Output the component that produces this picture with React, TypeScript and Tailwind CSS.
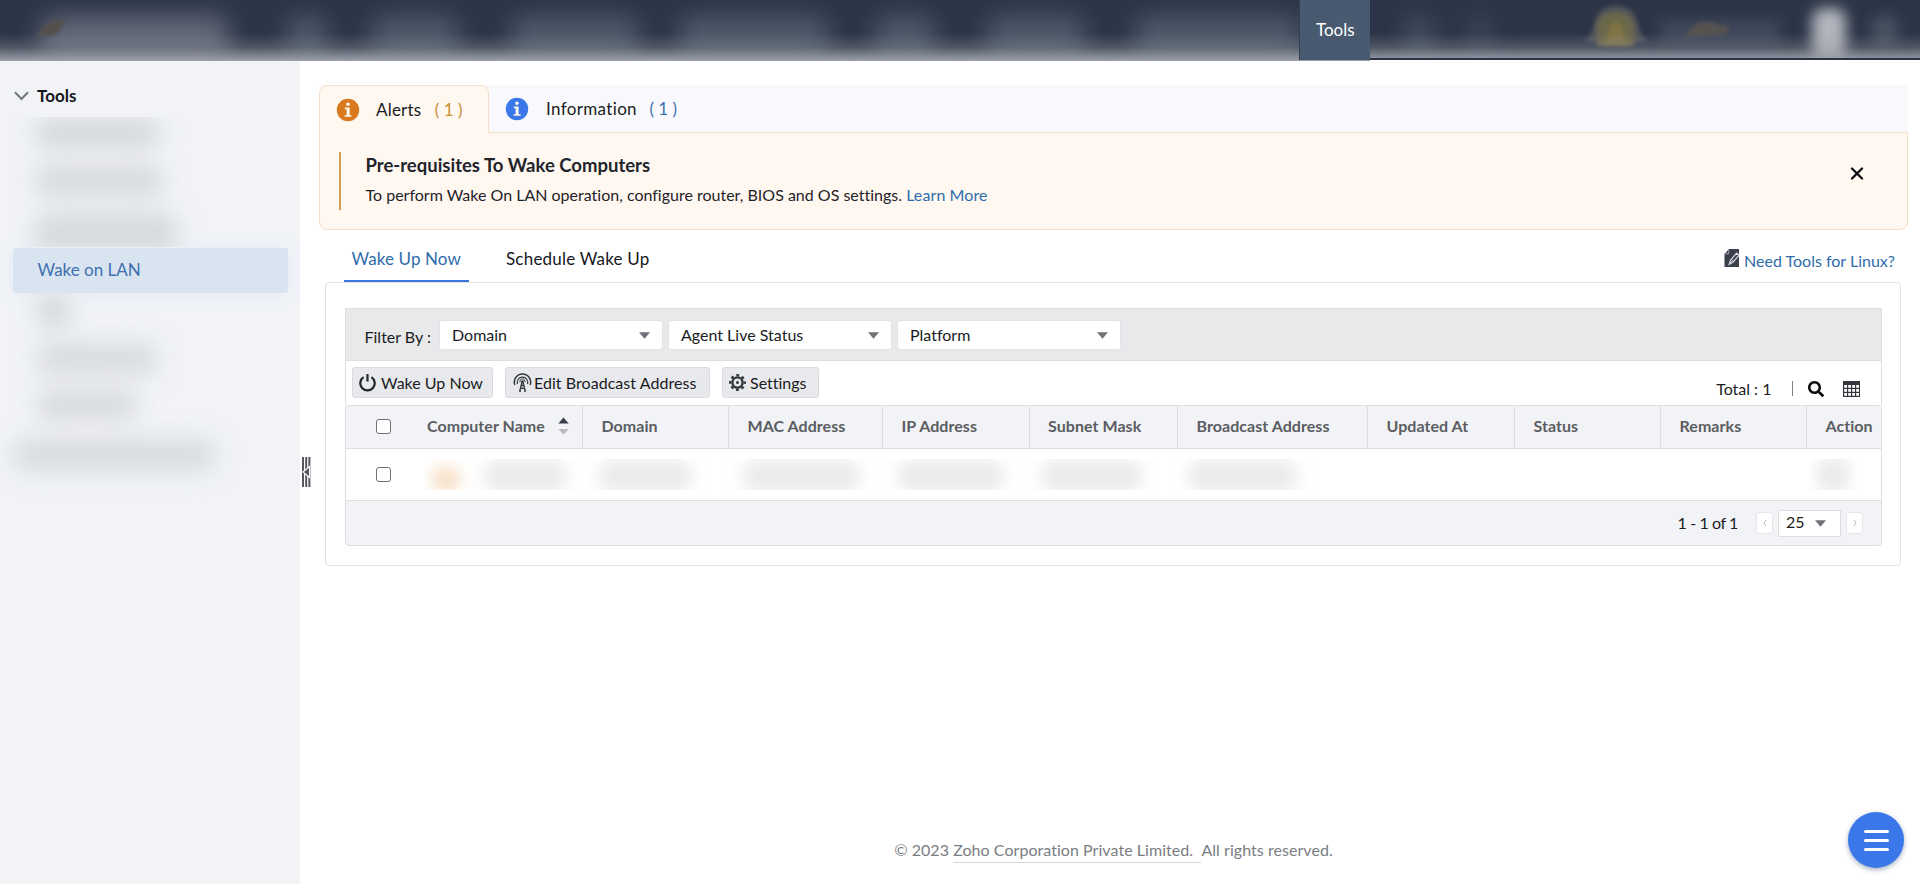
import type { ReactNode } from 'react';
import { FaSearch } from 'react-icons/fa';

const NAV_BLOBS = [
  'ml-[40px] w-[190px] bg-[#646a7a]',
  'ml-[56px] w-[42px] bg-[#4f5a6a]',
  'ml-[42px] w-[90px] bg-[#4f5a6a]',
  'ml-[50px] w-[130px] bg-[#4f5a6a]',
  'ml-[38px] w-[152px] bg-[#4f5a6a]',
  'ml-[44px] w-[62px] bg-[#4f5a6a]',
  'ml-[50px] w-[100px] bg-[#4f5a6a]',
  'ml-[48px] w-[168px] bg-[#4f5a6a]',
  'ml-[104px] w-[26px] bg-[#475262]',
  'ml-[40px] w-[16px] bg-[#444f60]',
];

function Header() {
  return (
    <header className="relative flex h-[61px] shrink-0 overflow-hidden bg-[#2c3547]">
      <div className="flex items-center pt-3 blur-[12px]">
        {NAV_BLOBS.map((c, i) => (
          <span key={i} className={`h-[42px] shrink-0 rounded-2xl ${c}`} />
        ))}
      </div>
      <svg className="absolute left-[34px] top-[16px] blur-[1.5px]" width="34" height="30" viewBox="0 0 34 30">
        <path d="M2 20C8 9 18 5 31 2C29 10 24 18 18 20Z" fill="#54504d" />
      </svg>
      <svg className="absolute left-[1570px] top-0" width="350" height="61" viewBox="0 0 350 61">
        <defs>
          <filter id="s1" x="-50%" y="-50%" width="200%" height="200%"><feGaussianBlur stdDeviation="2" /></filter>
          <filter id="s2" x="-100%" y="-50%" width="300%" height="200%"><feGaussianBlur stdDeviation="7" /></filter>
        </defs>
        <path d="M14 42Q22 36 24 24Q28 6 46 6Q64 6 68 24Q70 36 78 42Z" fill="#52545a" filter="url(#s1)" />
        <path d="M27 46V26Q30 12 46 12Q60 12 64 26V46Z" fill="#6b684c" filter="url(#s1)" />
        <path d="M33 44Q38 38 38 30Q40 22 46 22Q52 22 53 30Q54 38 60 44Z" fill="#7e7345" filter="url(#s1)" />
        <path d="M90 20H210V44H90Z" fill="#414a5b" filter="url(#s2)" />
        <path d="M114 37Q124 22 137 22Q144 22 150 26L158 25V34Q145 35 130 36Z" fill="#57534f" filter="url(#s1)" />
        <rect x="242" y="8" width="34" height="54" rx="12" fill="#b2b5bd" filter="url(#s2)" />
        <rect x="302" y="16" width="26" height="30" rx="10" fill="#485262" filter="url(#s2)" />
      </svg>
      <div className="absolute inset-x-0 bottom-0 h-[28px] bg-linear-to-b from-[#9b9da6]/0 via-[#9b9da6]/30 to-[#a3a5ad]/95" />
      <div className="absolute right-0 bottom-0 h-[3px] w-[550px] border-t-2 border-[#2b3446] bg-white" />
      <div className="absolute left-[1299px] top-0 h-[60px] w-[71px] border-l border-[#333e51] bg-[#475a70] pl-[16px] text-[17px] leading-[59px] text-white">
        Tools
      </div>
    </header>
  );
}

function Sidebar() {
  return (
    <aside className="flex w-[300px] shrink-0 flex-col bg-[#f1f3f7] pt-[20px]">
      <div className="flex h-[29px] items-center pl-[14px]">
        <svg width="15" height="10" viewBox="0 0 15 10" fill="none" stroke="#73767c" strokeWidth="2">
          <path d="M1 1.2L7.5 8L14 1.2" />
        </svg>
        <span className="ml-[8px] text-[17px] font-bold text-[#16181d]">Tools</span>
      </div>
      <div className="mt-[7px] h-[130px] overflow-hidden">
        <div className="flex flex-col gap-[16px] pl-[34px] blur-[11px]">
          <span className="h-[32px] w-[126px] rounded-2xl bg-[#d7d9dc]" />
          <span className="h-[32px] w-[130px] rounded-2xl bg-[#d8dadd]" />
          <span className="h-[40px] w-[144px] rounded-2xl bg-[#d7d9dc]" />
        </div>
      </div>
      <div className="mx-[13px] mr-[12px] mt-[1px] h-[45px] rounded-[3px] bg-[#d8e5f0] pl-[24.5px] text-[17px] leading-[43px] text-[#3f6fb0] shadow-[0_1px_16px_0_#e6eaf5]">
        Wake on LAN
      </div>
      <div className="h-[205px] overflow-hidden">
        <div className="flex flex-col pl-[12px] blur-[11px]">
          <span className="ml-[24px] h-[36px] w-[36px] rounded-2xl bg-[#d7d9dc]" />
          <span className="ml-[24px] mt-[14px] h-[32px] w-[122px] rounded-2xl bg-[#d9dbde]" />
          <span className="ml-[24px] mt-[14px] h-[32px] w-[102px] rounded-2xl bg-[#d9dbde]" />
          <span className="mt-[18px] h-[32px] w-[204px] rounded-2xl bg-[#d9dbde]" />
        </div>
      </div>
    </aside>
  );
}

function Info({ color }: { color: string }) {
  return (
    <svg width="24" height="24" viewBox="0 0 24 24">
      <circle cx="12" cy="12" r="11.2" fill={color} />
      <circle cx="12" cy="6.2" r="1.8" fill="#fff8ee" />
      <path d="M8.8 9.6h4.8v7.6h2v1.5H8.6v-1.5h2v-6H8.8z" fill="#fff8ee" />
    </svg>
  );
}

function Alerts() {
  return (
    <section>
      <div className="flex h-[47px] bg-[#f9f9fd] text-[17px] text-[#1a1c22]">
        <div className="relative z-10 -mb-px flex h-[48px] w-[170px] items-center rounded-t-[9px] border border-b-0 border-[#f5dfc8] bg-[#fff8f1] pl-[16px]">
          <Info color="#d97a20" />
          <span className="ml-[16px] tracking-[0.2px]">Alerts</span>
          <span className="ml-[13.5px] text-[#c98e35]">( 1 )</span>
        </div>
        <div className="flex items-center pt-px pl-[16px]">
          <Info color="#3a78ea" />
          <span className="ml-[17px] tracking-[0.35px]">Information</span>
          <span className="ml-[12.5px] text-[#3f6fb0]">( 1 )</span>
        </div>
      </div>
      <div className="flex h-[98px] rounded-b-[8px] border border-[#f5dfc8] bg-[#fff8f1] pl-[19px]">
        <div className="mt-[19px] h-[58px] border-l-2 border-[#cb9f4f] pl-[24.5px]">
          <h2 className="text-[18.5px] leading-[26px] font-bold text-[#22242b]">Pre-requisites To Wake Computers</h2>
          <p className="mt-[5px] text-[16px] leading-[24px] text-[#1f2228]">
            To perform Wake On LAN operation, configure router, BIOS and OS settings.{' '}
            <a className="tracking-[0.1px] text-[#2f6cab]">Learn More</a>
          </p>
        </div>
        <svg className="mt-[34px] mr-[43.5px] ml-auto" width="14" height="13" viewBox="0 0 14 13" stroke="#0b0c10" strokeWidth="2.3" strokeLinecap="round">
          <path d="M2 1.5L12 11.5M12 1.5L2 11.5" />
        </svg>
      </div>
    </section>
  );
}

function DocEdit() {
  return (
    <svg width="17" height="19" viewBox="0 0 17 19">
      <path d="M5 0H15V18H0.5V5Z" fill="#3a3f4b" />
      <path d="M4.6 0.4V4.6H0.6" fill="none" stroke="#8c9099" strokeWidth="1.2" />
      <path d="M5.2 15.3L6.6 11L12.6 4.2L15 6.4L9 13.2Z" fill="#3a3f4b" stroke="#d8dadf" strokeWidth="1.2" />
      <path d="M5.2 15.3L9.2 10.6" stroke="#d8dadf" strokeWidth="0.9" />
    </svg>
  );
}

function Tabs() {
  return (
    <div className="flex h-[52px] justify-between pl-[25px] text-[17px]">
      <div className="flex">
        <div className="relative z-10 h-[52px] w-[125px] border-b-2 border-[#3b77d8] pl-[7.5px] leading-[57px] tracking-[0.1px] text-[#2f6cab]">Wake Up Now</div>
        <div className="ml-[37px] leading-[57px] tracking-[0.2px] text-[#16181d]">Schedule Wake Up</div>
      </div>
      <div className="flex pr-[13px] pt-[19px]">
        <DocEdit />
        <a className="ml-[3px] text-[16px] leading-[24px] text-[#2f6cab]">Need Tools for Linux?</a>
      </div>
    </div>
  );
}

function Caret() {
  return (
    <svg width="11" height="7" viewBox="0 0 11 7">
      <path d="M0 0.3H11L5.5 6.8Z" fill="#6f7277" />
    </svg>
  );
}

function Select({ label }: { label: string }) {
  return (
    <div className="flex h-[30px] w-[224px] items-center justify-between rounded-[3px] border border-[#e2e3e6] bg-white pr-[12px] pl-[12px] text-[16px] text-[#1a1c22]">
      <span>{label}</span>
      <Caret />
    </div>
  );
}

function Button({ icon, label, cls }: { icon: ReactNode; label: string; cls: string }) {
  return (
    <button className={`flex h-[31px] items-center rounded-[3px] border border-[#dadbde] bg-[#e8e9ec] text-[16px] text-[#1a1c22] ${cls}`}>
      {icon}
      <span className="whitespace-nowrap">{label}</span>
    </button>
  );
}

function Power() {
  return (
    <svg className="mr-[5px]" width="17" height="18" viewBox="0 0 17 18" fill="none" stroke="#23262e" strokeWidth="2.2">
      <path d="M4.6 3.2A7.2 7.2 0 1 0 12.4 3.2" />
      <path d="M8.5 0V7.5" />
    </svg>
  );
}

function Antenna() {
  return (
    <svg className="mr-[2px]" width="19" height="19" viewBox="0 0 19 19" fill="none" stroke="#33363d">
      <path d="M1.8 12A8.2 8.2 0 1 1 17.2 12" strokeWidth="1.5" />
      <path d="M4.6 11A5.2 5.2 0 1 1 14.4 11" strokeWidth="1.2" />
      <path d="M7 9.3A2.6 2.6 0 1 1 12 9.3" strokeWidth="1" />
      <circle cx="9.5" cy="8.6" r="1.3" fill="#33363d" stroke="none" />
      <path d="M9 9L6.8 18M10 9L12.2 18M8 12.5H11M7.4 15.3H11.6M6 18.2H8M11 18.2H13" strokeWidth="1.3" />
    </svg>
  );
}

function Gear() {
  return (
    <svg className="mr-[4px]" width="17" height="17" viewBox="0 0 17 17" fill="none" stroke="#33363d">
      <circle cx="8.5" cy="8.5" r="5.1" strokeWidth="2.4" />
      <circle cx="8.5" cy="8.5" r="7.3" strokeWidth="2.2" strokeDasharray="2.9 2.83" strokeDashoffset="1.45" />
      <circle cx="8.5" cy="8.5" r="1.5" fill="#33363d" stroke="none" />
    </svg>
  );
}

function TableIcon() {
  return (
    <svg width="17" height="16" viewBox="0 0 17 16">
      <rect width="17" height="16" fill="#33363d" />
      <g fill="#fff">
        {[4, 8, 12].map((y) => [1.2, 5.2, 9.2, 13.2].map((x) => <rect key={`${x}-${y}`} x={x} y={y} width="2.8" height="2.8" />))}
      </g>
    </svg>
  );
}

const COLUMNS = [
  ['Domain', 'w-[146px]'],
  ['MAC Address', 'w-[154px]'],
  ['IP Address', 'w-[146.5px]'],
  ['Subnet Mask', 'w-[148.5px]'],
  ['Broadcast Address', 'w-[190px]'],
  ['Updated At', 'w-[147px]'],
  ['Status', 'w-[146px]'],
  ['Remarks', 'w-[146px]'],
  ['Action', 'w-[75px]'],
];

const ROW_BLOBS = [
  'ml-[24px] w-[84px]',
  'ml-[30px] w-[94px]',
  'ml-[50px] w-[118px]',
  'ml-[38px] w-[106px]',
  'ml-[36px] w-[102px]',
  'ml-[46px] w-[110px]',
];

function Check() {
  return <span className="block size-[15px] rounded-[3px] border border-[#6d7076] bg-white" />;
}

function Pager({ d }: { d: string }) {
  return (
    <span className="flex h-[22px] w-[17px] items-center justify-center rounded-[3px] border border-[#e6e7ea] bg-white">
      <svg width="4" height="8" viewBox="0 0 4 8" fill="none" stroke="#b9bbc0">
        <path d={d} />
      </svg>
    </span>
  );
}

function Panel() {
  return (
    <section className="mr-[7px] ml-[6px] h-[284px] rounded-[4px] border border-[#dfe1e4] pt-[25px] pr-[18px] pl-[19px]">
      <div className="h-[97px] border border-b-0 border-[#dcdee1]">
        <div className="flex h-[52px] border-b border-[#dcdee1] bg-[#e8e9eb] pt-[11px] pl-[18.5px] text-[16px] text-[#1a1c22]">
          <span className="w-[74.5px] leading-[34px]">Filter By :</span>
          <div className="flex gap-[5px]">
            <Select label="Domain" />
            <Select label="Agent Live Status" />
            <Select label="Platform" />
          </div>
        </div>
        <div className="flex pt-[6px] pl-[6px]">
          <div className="flex">
            <Button cls="w-[141px] pl-[6px]" icon={<Power />} label="Wake Up Now" />
            <Button cls="ml-[12px] w-[205px] pl-[7px] tracking-[0.05px]" icon={<Antenna />} label="Edit Broadcast Address" />
            <Button cls="ml-[12px] w-[97px] pl-[6px]" icon={<Gear />} label="Settings" />
          </div>
          <div className="mr-[21px] ml-auto flex h-[32px] items-center pt-[11px] text-[16px] text-[#1a1c22]">
            <span>Total : 1</span>
            <span className="mr-[15px] ml-[20px] h-[15px] w-[1.5px] bg-[#7d8088]" />
            <FaSearch size={16} color="#0b0c10" />
            <span className="ml-[19px]"><TableIcon /></span>
          </div>
        </div>
      </div>
      <div className="overflow-hidden rounded-[4px] border border-[#dcdee1] bg-[#f1f3f6]">
        <div className="flex h-[43px] border-b border-[#dcdee1] text-[16px] leading-[39px] font-bold text-[#5b5d62]">
          <div className="flex w-[236px]">
            <span className="mt-[13px] mr-[36px] ml-[30px]"><Check /></span>
            <span className="tracking-[0.05px]">Computer Name</span>
            <svg className="mt-[11px] ml-[13px]" width="11" height="18" viewBox="0 0 11 18">
              <path d="M0.3 6.5L5.5 0.5L10.7 6.5Z" fill="#3a3f4b" />
              <path d="M0.3 12L5.5 17.5L10.7 12Z" fill="#b9bbc0" />
            </svg>
          </div>
          {COLUMNS.map(([name, w]) => (
            <div key={name} className={`shrink-0 border-l border-[#dcdee1] pl-[18.5px] tracking-[0.05px] ${w}`}>{name}</div>
          ))}
        </div>
        <div className="flex h-[52px] items-center border-b border-[#dcdee1] bg-white">
          <span className="ml-[30px]"><Check /></span>
          <div className="ml-[33px] flex h-[31px] w-[1385px] items-start overflow-hidden">
            <div className="flex items-start blur-[8px]">
              <span className="mt-[8px] ml-[8px] h-[24px] w-[28px] shrink-0 rounded-full bg-[#f6dcc0]" />
              {ROW_BLOBS.map((c, i) => (
                <span key={i} className={`h-[34px] shrink-0 rounded-2xl bg-[#ebebec] ${c}`} />
              ))}
            </div>
          </div>
          <div className="flex h-[31px] w-[48px] items-center justify-center overflow-hidden">
            <span className="h-[36px] w-[34px] shrink-0 rounded-xl bg-[#ececee] blur-[7px]" />
          </div>
        </div>
        <div className="flex h-[44px] items-center justify-end pr-[18px] text-[16px] text-[#1a1c22]">
          <span className="mr-[18px] tracking-[-0.4px]">1 - 1 of 1</span>
          <Pager d="M3 1L1 4L3 7" />
          <span className="mr-[5px] ml-[5px] flex h-[27px] w-[63px] items-center border border-[#dcdee1] bg-white pl-[7px]">
            <span className="mr-[10px] -mt-[2px]">25</span>
            <Caret />
          </span>
          <Pager d="M1 1L3 4L1 7" />
        </div>
      </div>
    </section>
  );
}

function Handle() {
  return (
    <svg className="mt-[396px] ml-[1.5px] shrink-0" width="9" height="30" viewBox="0 0 9 30">
      <path d="M1 0V30M4.2 0V30M7.4 0V30" stroke="#55575c" strokeWidth="2" />
      <path d="M1 15L7.5 9.5V20.5Z" fill="#55575c" stroke="#fff" strokeWidth="1.1" />
    </svg>
  );
}

export default function App() {
  return (
    <div className="relative flex h-[884px] w-full flex-col overflow-hidden bg-white font-['Lato',sans-serif] [font-variant-ligatures:none]">
      <Header />
      <div className="flex min-h-0 flex-1">
        <Sidebar />
        <Handle />
        <main className="mr-[12px] ml-[8.5px] flex min-w-0 flex-1 flex-col pt-[24px]">
          <Alerts />
          <Tabs />
          <Panel />
          <footer className="mt-auto mb-[21px] flex justify-center text-[16px] leading-[24px] tracking-[0.05px] text-[#7a7d82]">
            <span>© 2023&nbsp;</span>
            <span className="border-b border-[#d5d7db] whitespace-pre">Zoho Corporation Private Limited.  </span>
            <span>All rights reserved.</span>
          </footer>
        </main>
      </div>
      <button className="absolute top-[812px] left-[1848px] flex size-[56px] flex-col items-center justify-center gap-[6px] rounded-full bg-[#3a78ea] shadow-[0_2px_5px_rgba(60,80,120,0.45)]">
        <span className="h-[3px] w-[25px] rounded-full bg-white" />
        <span className="h-[3px] w-[25px] rounded-full bg-white" />
        <span className="h-[3px] w-[25px] rounded-full bg-white" />
      </button>
    </div>
  );
}
